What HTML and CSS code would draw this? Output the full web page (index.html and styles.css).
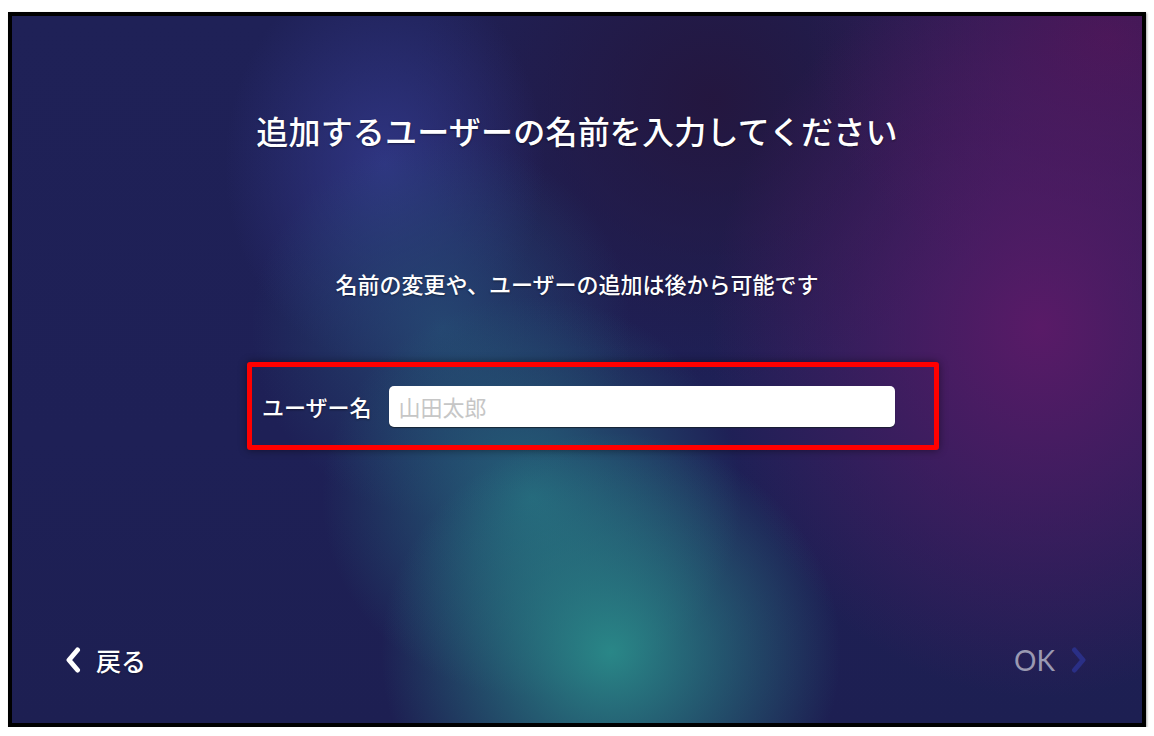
FILE: index.html
```html
<!DOCTYPE html>
<html lang="ja">
<head>
    <meta charset="UTF-8">
    <meta name="viewport" content="width=device-width, initial-scale=1.0">
    <title>ユーザーの追加</title>
    <link rel="stylesheet" href="styles.css">
</head>
<body>
    <div class="screen">
        <h1 class="title">追加するユーザーの名前を入力してください</h1>
        <p class="note">名前の変更や、ユーザーの追加は後から可能です</p>

        <div class="highlight">
            <div class="field">
                <label for="user-name">ユーザー名</label>
                <input type="text" id="user-name" placeholder="山田太郎">
            </div>
        </div>

        <div class="nav">
            <button class="nav-btn back">
                <svg width="16" height="26" viewBox="0 0 16 26">
                    <polyline points="12.5,3 4,13 12.5,23" fill="none" stroke="#fff" stroke-width="5" stroke-linecap="round" stroke-linejoin="round"/>
                </svg>
                <span>戻る</span>
            </button>
            <button class="nav-btn ok" disabled>
                <span>OK</span>
                <svg width="16" height="26" viewBox="0 0 16 26">
                    <polyline points="3.5,3 12,13 3.5,23" fill="none" stroke="#2a2f86" stroke-width="5" stroke-linecap="round" stroke-linejoin="round"/>
                </svg>
            </button>
        </div>
    </div>
</body>
</html>
```

FILE: styles.css
```css
* {
    margin: 0;
    padding: 0;
    box-sizing: border-box;
    font-family: "Noto Sans CJK JP", "Noto Sans", sans-serif;
}

body {
    background: #fff;
    padding: 12px 8px 0 8px;
}

/* background: diagonal blue-to-teal streak, purple glow on the right */
.screen {
    width: 1138px;
    height: 715px;
    border: 4px solid #000;
    box-shadow: 1px 1px 2px rgba(0, 0, 0, 0.35);
    display: flex;
    flex-direction: column;
    align-items: center;
    color: #fff;
    background:
        radial-gradient(ellipse 230px 220px at 53% 90%, rgba(42, 140, 138, 0.95) 0%, rgba(42, 140, 138, 0) 100%),
        radial-gradient(ellipse 210px 200px at 46% 68%, rgba(38, 110, 128, 0.85) 0%, rgba(38, 110, 128, 0) 100%),
        radial-gradient(ellipse 190px 190px at 38% 44%, rgba(38, 78, 118, 0.8) 0%, rgba(38, 78, 118, 0) 100%),
        radial-gradient(ellipse 160px 200px at 33% 21%, rgba(48, 54, 132, 0.95) 0%, rgba(48, 54, 132, 0) 100%),
        radial-gradient(ellipse 330px 370px at 91% 44%, rgba(92, 26, 104, 0.95) 0%, rgba(92, 26, 104, 0) 100%),
        radial-gradient(ellipse 300px 260px at 97% 3%, rgba(76, 22, 86, 0.9) 0%, rgba(76, 22, 86, 0) 100%),
        radial-gradient(ellipse 300px 280px at 62% 12%, rgba(36, 22, 62, 0.95) 0%, rgba(36, 22, 62, 0) 100%),
        linear-gradient(180deg, #1f2157 0%, #1e2056 60%, #1d1f52 100%);
}

.title {
    margin-top: 94px;
    font-size: 32px;
    line-height: 40px;
    font-weight: 500;
    letter-spacing: 0.2px;
    text-shadow: 0 1px 2px rgba(0, 0, 0, 0.45);
}

.note {
    margin-top: 118px;
    font-size: 22px;
    line-height: 30px;
    font-weight: 500;
    text-shadow: 0 1px 2px rgba(0, 0, 0, 0.45);
}

.highlight {
    align-self: flex-start;
    margin-top: 64px;
    margin-left: 235px;
    width: 692px;
    height: 88px;
    border: 5px solid #ff0000;
    border-radius: 3px;
    box-shadow: 0 0 8px rgba(0, 0, 0, 0.45);
    padding-left: 10px;
    display: flex;
    align-items: center;
}

.field {
    display: flex;
    align-items: center;
    gap: 17px;
}

.field label {
    font-size: 22px;
    font-weight: 500;
    text-shadow: 0 1px 2px rgba(0, 0, 0, 0.45);
}

.field input {
    width: 506px;
    height: 41px;
    border: none;
    border-radius: 5px;
    background: #fff;
    box-shadow: 0 1px 1px rgba(20, 30, 40, 0.8);
    padding: 0 10px;
    font-size: 22px;
    color: #333;
    outline: none;
}

.field input::placeholder {
    color: #c6c6c6;
}

.nav {
    margin-top: auto;
    margin-bottom: 43px;
    width: 100%;
    height: 40px;
    padding: 0 55px 0 53px;
    display: flex;
    justify-content: space-between;
    align-items: center;
}

.nav-btn {
    display: flex;
    align-items: center;
    background: none;
    border: none;
    font-size: 25px;
    font-weight: 500;
    color: #fff;
    cursor: pointer;
}

.nav-btn svg {
    display: block;
}

.back {
    gap: 15px;
}

.back span {
    text-shadow: 0 1px 2px rgba(0, 0, 0, 0.4);
}

.ok {
    gap: 16px;
    cursor: default;
}

.ok span {
    color: #9a99b2;
    font-family: "Lato", "Noto Sans", sans-serif;
    font-size: 28px;
    font-weight: 400;
}
```
